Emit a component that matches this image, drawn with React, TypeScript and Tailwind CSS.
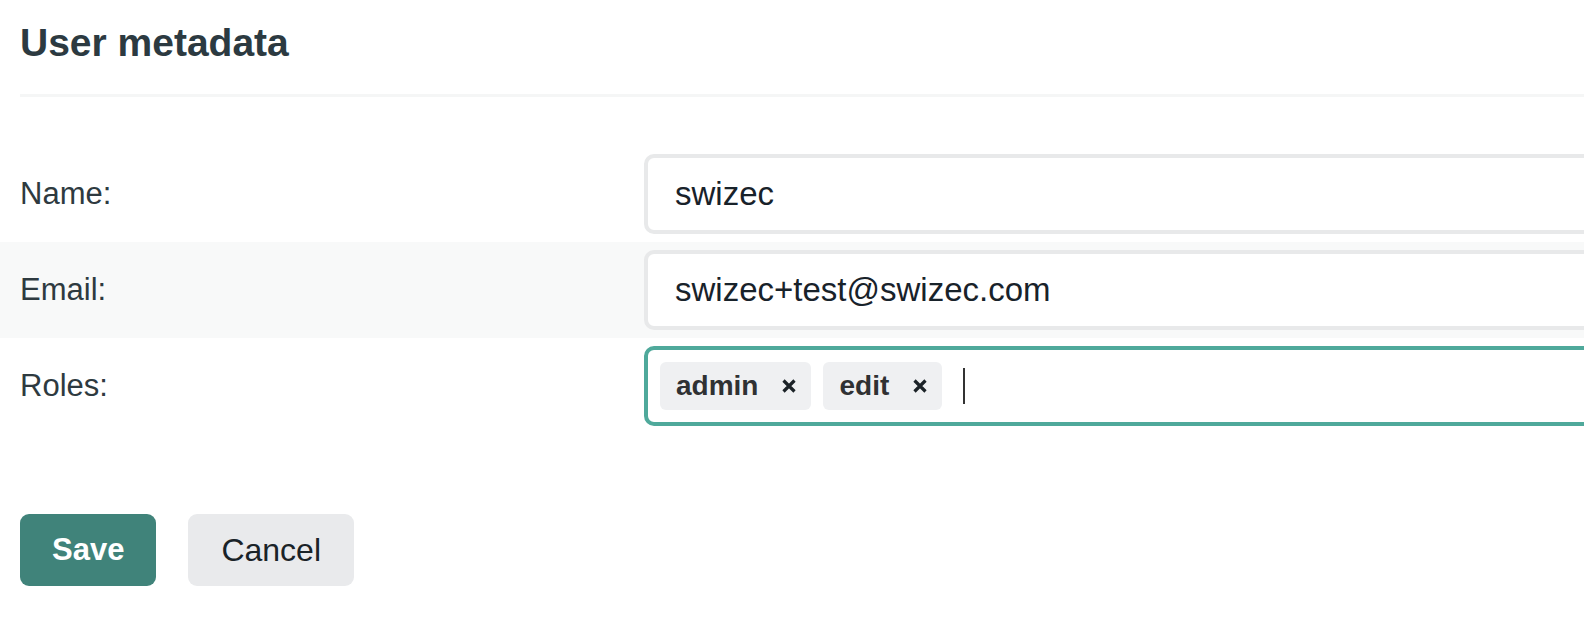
import { type JSX } from 'react'

const font = { fontFamily: '"Liberation Sans", Arial, sans-serif' }

function Field({
  label,
  shaded,
  children,
}: {
  label: string
  shaded?: boolean
  children: React.ReactNode
}): JSX.Element {
  return (
    <div
      className={`grid h-[96px] grid-cols-[624px_1fr] items-center pl-5 ${
        shaded ? 'bg-[#f8f9f9]' : ''
      }`}
    >
      <label className="text-[31px] text-[#2e3a40]">{label}</label>
      {children}
    </div>
  )
}

function TextInput({ value }: { value: string }): JSX.Element {
  return (
    <div className="flex h-[80px] items-center rounded-[10px] border-4 border-[#e8e9ea] bg-white pl-[27px] text-[33px] text-[#18222a]">
      {value}
    </div>
  )
}

function Chip({ text }: { text: string }): JSX.Element {
  return (
    <span className="flex h-[48px] items-center rounded-[6px] bg-[#eff0f2] pl-4 pr-[15px] text-[28px] font-bold text-[#2f3133]">
      {text}
      <svg
        width="14"
        height="14"
        viewBox="0 0 14 14"
        className="ml-[24px]"
        aria-hidden
      >
        <path d="M1.5 1.5L12.5 12.5M12.5 1.5L1.5 12.5" stroke="#1c2328" strokeWidth="3.2" />
      </svg>
    </span>
  )
}

export default function App(): JSX.Element {
  return (
    <div className="w-[1584px] overflow-hidden bg-white" style={font}>
      <div className="w-[1800px]">
        <h1 className="pl-5 pt-[19px] text-[39px] font-bold leading-[47px] text-[#2c3a41]">
          User metadata
        </h1>
        <div className="ml-5 mt-[28px] h-[3px] bg-[#f5f6f6]" />

        <div className="mt-[49px]">
          <Field label="Name:">
            <TextInput value="swizec" />
          </Field>
          <Field label="Email:" shaded>
            <TextInput value="swizec+test@swizec.com" />
          </Field>
          <Field label="Roles:">
            <div className="flex h-[80px] items-center gap-3 rounded-[10px] border-4 border-[#4fa99b] bg-white pl-3">
              <Chip text="admin" />
              <Chip text="edit" />
              <span className="ml-[9px] h-[36px] w-[2px] bg-[#333]" />
            </div>
          </Field>
        </div>

        <div className="mt-[80px] flex gap-8 pl-5">
          <button className="h-[72px] rounded-[9px] bg-[#40837a] px-8 text-[31px] font-bold text-white">
            Save
          </button>
          <button className="h-[72px] rounded-[9px] bg-[#e9eaec] px-[33px] text-[32px] text-[#1a2328]">
            Cancel
          </button>
        </div>
        <div className="h-[37px]" />
      </div>
    </div>
  )
}
